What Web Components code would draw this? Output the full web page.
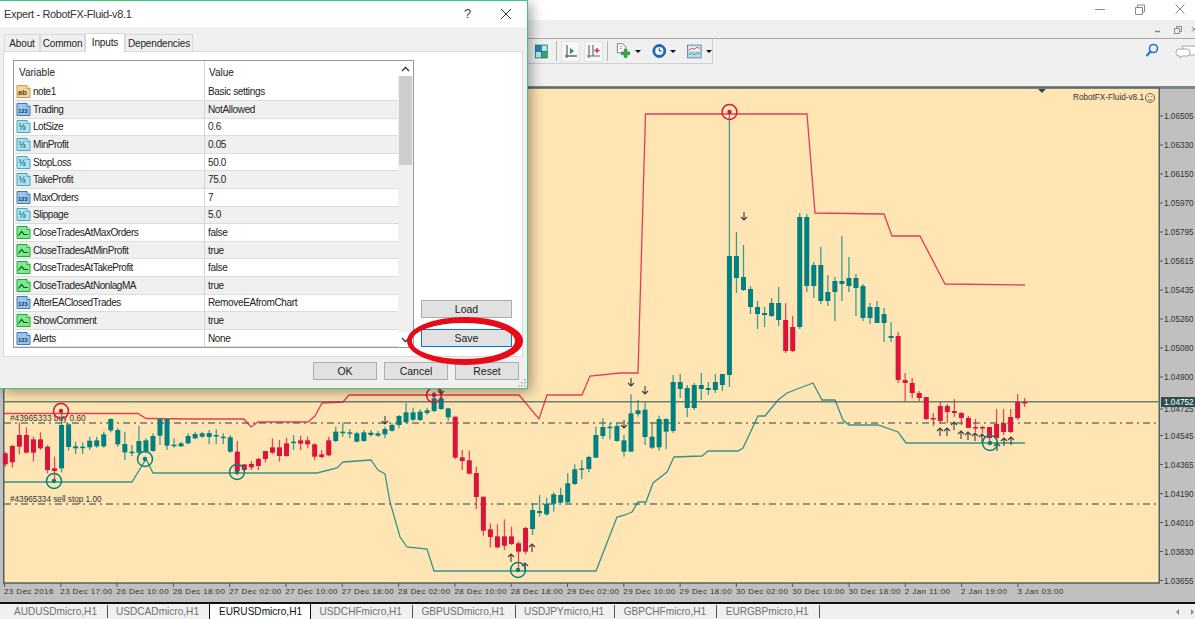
<!DOCTYPE html>
<html>
<head>
<meta charset="utf-8">
<style>
html, body { margin: 0; padding: 0; height: 619px; overflow: hidden; background: #f0f0f0; }
body { font-family: "Liberation Sans", Arial, sans-serif; }
</style>
</head>
<body>
<mt-app>
  <win-caption></win-caption>
  <main-toolbar></main-toolbar>
  <chart-view></chart-view>
  <chart-tabs>
    <chart-tab first>AUDUSDmicro,H1</chart-tab>
    <chart-tab noline>USDCADmicro,H1</chart-tab>
    <chart-tab active>EURUSDmicro,H1</chart-tab>
    <chart-tab>USDCHFmicro,H1</chart-tab>
    <chart-tab>GBPUSDmicro,H1</chart-tab>
    <chart-tab>USDJPYmicro,H1</chart-tab>
    <chart-tab>GBPCHFmicro,H1</chart-tab>
    <chart-tab>EURGBPmicro,H1</chart-tab>
  </chart-tabs>
  <expert-dialog>
    <input-row kind="str" name="note1" value="Basic settings"></input-row>
    <input-row kind="int" name="Trading" value="NotAllowed" shaded></input-row>
    <input-row kind="dbl" name="LotSize" value="0.6"></input-row>
    <input-row kind="dbl" name="MinProfit" value="0.05" shaded></input-row>
    <input-row kind="dbl" name="StopLoss" value="50.0"></input-row>
    <input-row kind="dbl" name="TakeProfit" value="75.0" shaded></input-row>
    <input-row kind="int" name="MaxOrders" value="7"></input-row>
    <input-row kind="dbl" name="Slippage" value="5.0" shaded></input-row>
    <input-row kind="bool" name="CloseTradesAtMaxOrders" value="false"></input-row>
    <input-row kind="bool" name="CloseTradesAtMinProfit" value="true" shaded></input-row>
    <input-row kind="bool" name="CloseTradesAtTakeProfit" value="false"></input-row>
    <input-row kind="bool" name="CloseTradesAtNonlagMA" value="true" shaded></input-row>
    <input-row kind="int" name="AfterEAClosedTrades" value="RemoveEAfromChart"></input-row>
    <input-row kind="bool" name="ShowComment" value="true" shaded></input-row>
    <input-row kind="int" name="Alerts" value="None"></input-row>
  </expert-dialog>
</mt-app>

<script>
class MtApp extends HTMLElement {
    constructor(){
        super();
        this.attachShadow({mode: 'open'}).innerHTML = `
        <style>
        :host { display: flex; flex-direction: column; width: 1195px; height: 619px; position: relative; overflow: hidden; }
        </style>
        <slot></slot>`;
    }
}

class WinCaption extends HTMLElement {
    constructor(){
        super();
        this.attachShadow({mode: 'open'}).innerHTML = `
        <style>
        :host { display: block; height: 38px; background: #efefef; }
        .top { height: 20px; background: #fff; display: flex; justify-content: flex-end; align-items: center; }
        .sub { height: 18px; display: flex; justify-content: flex-end; align-items: center; }
        svg { display: block; }
        </style>
        <div class="top">
          <svg width="110" height="20" viewBox="1085 0 110 20" fill="none" stroke="#8a8a8a">
            <path d="M1095 9.5h10"/>
            <path d="M1135.5 7.5h7v7h-7zM1137.5 7.5v-2.500h7v7h-2"/>
            <path d="M1175.500 4.500l9 9M1184.500 4.500l-9 9"/>
          </svg>
        </div>
        <div class="sub">
          <svg width="45" height="18" viewBox="1150 20 45 18" fill="none" stroke="#8a8a8a">
            <path d="M1155 31.500h5" stroke-width="1.500"/>
            <path d="M1174.500 28.500h5v5h-5zM1176.500 28.500v-2h5v5h-2"/>
            <path d="M1192 27l4 4.500M1196 27l-4 4.500"/>
          </svg>
        </div>`;
    }
}

class MainToolbar extends HTMLElement {
    constructor(){
        super();
        this.attachShadow({mode: 'open'}).innerHTML = `
        <style>
        :host { display: flex; height: 48px; background: #f0f0f0; border-top: 1px solid #a9a9a9; box-sizing: border-box; }
        .band { width: 713px; height: 25px; box-sizing: border-box; border-right: 1px solid #d0d0d0; border-bottom: 1px solid #d0d0d0; display: flex; align-items: center; padding-left: 535px; }
        .sep { width: 1px; height: 20px; background: #b5b5b5; margin: 0 4px 0 8px; }
        .btn { width: 21px; height: 21px; box-sizing: border-box; border: 1px solid #e3e3e3; background: #f7f7f7; display: flex; align-items: center; justify-content: center; margin-right: 4px; }
        .sep2 { margin: 0 8px 0 0; }
        .caret { width: 0; height: 0; border: 3px solid transparent; border-top: 3px solid #111; border-bottom: 0; margin: 0 12px 0 4px; }
        .right { flex: 1; display: flex; justify-content: flex-end; padding: 4px 0 0 0; gap: 16px; }
        svg { display: block; }
        </style>
        <div class="band">
          <svg width="14" height="15" viewBox="0 0 14 15">
            <rect width="14" height="15" fill="#148a6a"/>
            <rect x="1" y="1" width="5.500" height="6" fill="#2d7fc7"/><rect x="7.500" y="1" width="5.500" height="6" fill="#bfe0f2"/>
            <rect x="1" y="8" width="5.500" height="6" fill="#bfe0f2"/><rect x="7.500" y="8" width="5.500" height="6" fill="#35a868"/>
          </svg>
          <div class="sep"></div>
          <div class="btn">
            <svg width="15" height="15" viewBox="0 0 15 15" fill="none">
              <path d="M4 1v11h10M2 12h2v2" stroke="#6b6b6b" stroke-width="1.300"/>
              <path d="M7 4v6l4-3z" fill="#1f9a4b"/>
            </svg>
          </div>
          <div class="btn">
            <svg width="15" height="15" viewBox="0 0 15 15" fill="none">
              <path d="M3 1v11h11M1 12h2v2M7 1v11" stroke="#6b6b6b" stroke-width="1.200"/>
              <path d="M8.500 6.500h5M11 4v5" stroke="#d8232f" stroke-width="1.300"/>
            </svg>
          </div>
          <div class="sep sep2"></div>
          <svg width="16" height="18" viewBox="0 0 16 18" fill="none">
            <path d="M1.500 1h6l3 3v7h-9z" fill="#fff" stroke="#777"/>
            <path d="M4 4h3M4 6.500h3" stroke="#999"/>
            <path d="M9 7h3v3h3v3h-3v3H9v-3H6v-3h3z" fill="#2fae3f" stroke="#1a7d2a" stroke-width=".6"/>
          </svg>
          <div class="caret"></div>
          <svg width="16" height="16" viewBox="0 0 16 16" fill="none" style="margin-left:-1px">
            <circle cx="8" cy="8" r="7" fill="#1d6fc2" stroke="#0f4f96"/>
            <circle cx="8" cy="8" r="4.500" fill="#eef5fb"/>
            <path d="M8 5v3h2.500" stroke="#333"/>
          </svg>
          <div class="caret"></div>
          <svg width="16" height="15" viewBox="0 0 16 15" style="margin-left:-1px" fill="none">
            <rect x=".5" y=".5" width="15" height="14" fill="#b9d9f0" stroke="#5b87ad"/>
            <rect x="2" y="2" width="12" height="5" fill="#eef2f6"/>
            <path d="M2 6l3-2 3 1 3-2 3 1" stroke="#c9482f"/>
            <path d="M2 11l3-2 3 2 3-2 3 1" stroke="#3c9c45"/>
          </svg>
          <div class="caret" style="margin-right:0"></div>
        </div>
        <div class="right">
          <svg width="14" height="15" viewBox="0 0 14 15" fill="none">
            <circle cx="8.500" cy="5.500" r="4" stroke="#1d74c9" stroke-width="1.600"/>
            <path d="M5.500 8.500L1.500 13" stroke="#1d74c9" stroke-width="2.200"/>
          </svg>
          <svg width="24" height="16" viewBox="0 0 24 16" fill="#fff" stroke="#a8a8a8" style="margin-right:-4px">
            <path d="M7 3h12a3 3 0 0 1 3 3v3a3 3 0 0 1-3 3h-8z"/>
            <path d="M4 6h8a3 3 0 0 1 3 3v1a3 3 0 0 1-3 3H7l-2 2v-2H4a3 3 0 0 1-3-3V9a3 3 0 0 1 3-3z"/>
          </svg>
        </div>`;
    }
}

// candles: [bodyTop, bodyBottom, wickTop, wickBottom, 'r'|'t']
function fromZoom(list){
    return list.map(c => [385 + c[0] / 3, 385 + c[1] / 3, 385 + c[2] / 3, 385 + c[3] / 3, c[4]]);
}

const CANDLES = [].concat(fromZoom([
    [205,238,200,245,'r'],[183,232,180,248,'r'],[150,185,112,208,'r'],[150,203,127,205,'r'],[163,203,155,230,'r'],
    [163,190,142,195,'r'],[185,255,180,265,'r'],[250,258,215,290,'r'],[120,250,80,262,'t'],[118,186,115,197,'t'],
    [184,190,170,207,'t'],[185,188,172,207,'t'],[167,187,155,195,'t'],[166,184,155,188,'t'],[148,184,140,188,'t'],
    [102,136,100,142,'t'],[135,178,128,185,'t'],[177,202,140,225,'t'],[200,204,180,213,'t'],[168,203,122,210,'t'],
    [166,200,160,205,'t'],[153,198,145,200,'t'],[102,152,100,180,'t'],[102,182,100,195,'t'],[179,182,160,188,'t'],
    [175,184,170,186,'t'],[153,175,145,178,'t'],[147,160,140,162,'t'],[145,155,140,158,'t'],[144,156,135,178,'t'],
    [150,153,133,178,'t'],[155,157,145,178,'t'],[157,200,150,203,'t'],[200,258,168,270,'r'],[238,255,238,258,'r'],
    [237,247,228,255,'r'],[222,243,218,255,'r'],[198,222,198,232,'r'],[187,203,160,208,'r'],[187,213,165,230,'r'],
    [175,213,158,215,'r'],[170,173,150,195,'t'],[166,176,152,195,'r'],[166,178,155,190,'r'],[178,215,175,225,'r'],
    [208,216,195,220,'r'],[166,211,155,214,'r'],[140,168,125,172,'t'],[140,143,112,155,'t'],[142,146,133,160,'t'],
    [145,170,140,172,'t'],[142,168,135,170,'t'],[143,150,135,155,'t'],[145,152,138,155,'t'],[132,148,125,160,'t'],
    [120,137,115,140,'t'],[93,120,90,130,'t'],
    [82,112,55,115,'t'],[82,104,68,108,'t'],[80,105,72,108,'t'],[76,84,68,90,'t'],[40,78,20,82,'t'],
    [40,72,25,75,'t'],[70,97,68,108,'t'],[95,218,95,222,'r'],[217,228,195,255,'r'],[226,266,197,268,'r'],
    [264,336,245,372,'r'],[335,437,335,452,'r'],[433,456,415,487,'r'],[454,487,418,490,'r'],[454,482,403,495,'r'],
    [454,477,425,480,'r'],[475,500,470,555,'r'],[429,500,425,508,'r'],[375,432,355,450,'t'],[378,384,330,395,'t'],
    [356,388,338,392,'t'],[328,356,322,380,'t'],[330,353,308,355,'t'],[295,352,265,355,'t'],[253,297,238,300,'t'],
    [250,254,226,283,'t'],[216,252,212,262,'t'],[150,218,125,218,'t'],[126,153,100,162,'t'],[125,129,113,163,'t'],
    [123,168,115,170,'t'],[166,200,150,215,'t'],[85,200,28,200,'t'],[76,87,45,95,'t'],[74,156,52,180,'t'],
    [155,188,112,192,'t'],[102,187,92,197,'t'],[102,140,100,192,'t']
]), [
    [382,431,375,433,'t'],[382,389,374,398,'t'],[388,408,385,417,'t'],[385,408,383,410,'t'],[385,389,373,400,'t'],
    [388,390,382,395,'t'],[382,390,374,393,'t'],[374,385,374,391,'t'],[256,375,112,387,'t'],[256,278,232,293,'t'],
    [277,290,245,291,'t'],[289,307,286,314,'t'],[307,314,301,329,'t'],[313,315,307,327,'t'],[303,316,298,317,'t'],
    [303,320,287,326,'t'],[320,351,303,353,'r'],[327,351,316,352,'r'],[217,327,213,329,'t'],[217,286,214,292,'t'],
    [265,286,262,298,'t'],[265,301,247,304,'t'],[292,301,275,306,'t'],[281,292,277,321,'t'],[281,284,236,301,'t'],
    [278,286,257,292,'t'],[278,288,274,316,'t'],[286,318,284,321,'t'],[307,318,303,324,'t'],[307,323,301,323,'t'],
    [314,323,308,342,'t'],[336,338,322,342,'t'],
    [336,380,332,383,'r'],[380,383,373,401,'r'],[383,393,378,398,'r'],[393,398,391,401,'r'],[397,419,397,420,'r'],
    [418,419,413,426,'r'],[406,421,402,423,'r'],[406,412,404,423,'r'],[411,413,399,417,'r'],[413,418,412,425,'r'],
    [418,428,416,428,'r'],[427,428,419,432,'r'],[427,428,426,433,'r'],[427,438,427,443,'r'],[424,438,409,440,'r'],
    [423,432,409,435,'r'],[417,432,409,433,'r'],[402,418,394,420,'r'],[402,403,398,407,'r']
]);

const RED_LINE = "4,413.500 138,413.500 146,418.500 192,419 244,419 251,427 258,422 308,422 315,416 322,403 343,402 349,395 519,395 539,419 547,395 582,395 590,376 620,373 638,373 645.500,114 807,114 815,213 884,214 892,236 920,236 945,284 1025,285";
const TEAL_LINE = "4,482 132,482 146,459 153,473 317,473 337,468 343,462 371,460 378,470 385,474 390,502 400,537 407,547 427,549 434,571 596,571 617,517 625,515 632,512 638,502 646,502 653,483 667,472 674,457 702,456 708,451 738,451 743,448 758,416 765,416 778,400 787,393 813,383 822,400 835,400 843,420 849,425 878,425 898,432 906,443 1025,443";

const X_LABELS = ["23 Dec 2016","23 Dec 17:00","26 Dec 10:00","26 Dec 18:00","27 Dec 02:00","27 Dec 10:00","27 Dec 18:00","28 Dec 02:00","28 Dec 10:00","28 Dec 18:00","29 Dec 02:00","29 Dec 10:00","29 Dec 18:00","30 Dec 02:00","30 Dec 10:00","30 Dec 18:00","2 Jan 11:00","2 Jan 19:00","3 Jan 03:00"];
const Y_LABELS = [["1.06505",116],["1.06330",145],["1.06150",174],["1.05970",203],["1.05795",232],["1.05615",261],["1.05435",290],["1.05260",319],["1.05080",348],["1.04900",377],["1.04725",409],["1.04545",435.500],["1.04365",464.500],["1.04190",493.500],["1.04010",522.500],["1.03830",551.500],["1.03655",580.500]];

const UP_ARROWS = [[511,558],[532,548],[525,567],[940,432],[947,432],[954,426],[961,435],[968,436],[975,437],[982,438],[997,447],[1004,442],[1011,441]];
const DOWN_ARROWS = [[744,216],[631,382],[645,390],[385,420],[624,424],[441,390]];
const RED_MARKS = [[729.500,112],[61,411],[434,395]];
const TEAL_MARKS = [[54,481],[145,459],[237,472],[518,570],[990,443]];

class ChartView extends HTMLElement {
    constructor(){
        super();
        this.attachShadow({mode: 'open'});
    }

    connectedCallback(){
        this.render();
    }

    render(){
        const candles = CANDLES.map((c, i) => {
            const x = 5.33 + 7.03 * i;
            const col = c[4] === 'r' ? '#dc143c' : '#008080';
            return `<line x1="${x}" x2="${x}" y1="${c[2]}" y2="${c[3]}" stroke="${col}" stroke-opacity=".75" stroke-width="1.300"/>` +
                `<rect x="${x - 2.5}" y="${c[0]}" width="5" height="${Math.max(c[1] - c[0], 1.5)}" fill="${col}"/>`;
        }).join('');
        const xAxis = X_LABELS.map((t, i) => {
            const x = 4 + 56.3 * i;
            return `<line x1="${x + .5}" x2="${x + .5}" y1="583" y2="587" stroke="#555"/><text x="${x}" y="594" font-size="8" letter-spacing=".4">${t}</text>`;
        }).join('');
        const yAxis = Y_LABELS.map(l =>
            `<line x1="1160" x2="1163" y1="${l[1]}" y2="${l[1]}" stroke="#555"/><text x="1164" y="${l[1] + 3}" font-size="8.200">${l[0]}</text>`
        ).join('');
        const arrow = (x, y, up) => {
            const d = up ? -1 : 1;
            return `<path d="M${x} ${y - 4 * d}v${8 * d}M${x - 3} ${y + d}l3 ${3 * d}l3 ${-3 * d}" fill="none" stroke="#3a3a48" stroke-width="1.100"/>`;
        };
        const arrows = UP_ARROWS.map(a => arrow(a[0], a[1], true)).join('') + DOWN_ARROWS.map(a => arrow(a[0], a[1], false)).join('');
        const mark = (m, col) => `<circle cx="${m[0]}" cy="${m[1]}" r="7.500" fill="none" stroke="${col}" stroke-width="1.500"/><circle cx="${m[0]}" cy="${m[1]}" r="2.200" fill="${col}"/>`;
        const marks = RED_MARKS.map(m => mark(m, '#dc143c')).join('') + TEAL_MARKS.map(m => mark(m, '#008080')).join('');

        this.shadowRoot.innerHTML = `
        <style>
        :host { display: block; height: 516px; background: #c0c0c0; }
        svg { display: block; }
        text { font-family: "Liberation Sans", Arial, sans-serif; fill: #333; }
        .plot { fill: #ffe5b4; stroke: #4e6464; stroke-width: 1.500; }
        </style>
        <svg width="1195" height="516" viewBox="0 86 1195 516">
          <rect x="0" y="86" width="1195" height="3" fill="#7d8585"/>
          <rect class="plot" x="3.750" y="88" width="1155.500" height="495"/>
          <path d="M1038 89h8l-4 4z" fill="#2f4f4f"/>
          <line x1="4" x2="1160" y1="401.700" y2="401.700" stroke="#6a7f70" stroke-width="1.500"/>
          <line x1="4" x2="1160" y1="423" y2="423" stroke="#6a7a6c" stroke-width="1.500" stroke-dasharray="7 4 2 4"/>
          <line x1="4" x2="1160" y1="504" y2="504" stroke="#6a7a6c" stroke-width="1.500" stroke-dasharray="7 4 2 4"/>
          <text x="10" y="421" font-size="8.300">#43965333 buy 0.60</text>
          <text x="10" y="502" font-size="8.200">#43965334 sell stop 1.00</text>
          <polyline points="${RED_LINE}" fill="none" stroke="#dc143c" stroke-opacity=".8" stroke-width="1.300"/>
          <polyline points="${TEAL_LINE}" fill="none" stroke="#008080" stroke-opacity=".8" stroke-width="1.300"/>
          ${candles}
          ${arrows}
          ${marks}
          <text x="1073" y="100" font-size="8.200">RobotFX-Fluid-v8.1</text>
          <g fill="none" stroke="#444" stroke-width=".8">
            <circle cx="1150" cy="98" r="4.500"/>
            <path d="M1147.800 99.500q2.200 2 4.400 0"/>
            <path d="M1148.300 96v1M1151.700 96v1"/>
          </g>
          ${xAxis}
          ${yAxis}
          <rect x="1161" y="397" width="34" height="10" fill="#2f4f4f"/>
          <text x="1164" y="405" font-size="8.200" style="fill:#fff">1.04752</text>
        </svg>`;
    }
}

class ChartTabs extends HTMLElement {
    constructor(){
        super();
        this.attachShadow({mode: 'open'}).innerHTML = `
        <style>
        :host { display: flex; height: 17px; box-sizing: border-box; border-top: 2px solid #111; background: #f0f0f0; padding-left: 3px; align-items: stretch; position: relative; }
        .nav { position: absolute; right: 0; top: 0; bottom: 0; display: flex; align-items: center; gap: 12px; padding-right: 1px; }
        .nav i { width: 0; height: 0; border: 3px solid transparent; }
        .nav .l { border-right: 3px solid #8a8a8a; border-left: 0; }
        .nav .r { border-left: 3px solid #8a8a8a; border-right: 0; }
        </style>
        <slot></slot>
        <div class="nav"><i class="l"></i><i class="r"></i></div>`;
    }
}

class ChartTab extends HTMLElement {
    constructor(){
        super();
        this.attachShadow({mode: 'open'}).innerHTML = `
        <style>
        :host { display: flex; align-items: center; box-sizing: border-box; padding: 0 10px 0 8.500px; font-size: 10.100px; color: #707070; border-right: 1px solid #555; margin: 1px 0; white-space: nowrap; }
        :host([first]) { padding-left: 11px; }
        :host([noline]) { border-right: 0; padding-left: 8px; }
        :host([active]) { background: #fff; color: #111; border-left: 1px solid #111; border-right: 1px solid #111; margin: 0; padding: 0 8px 0 9px; }
        </style>
        <slot></slot>`;
    }
}

const PAGE = 'M1 1.500h10l3 3v9H1z';
const FOLD = 'M11 1.500v3h3';
const ICONS = {
    str: `<path d="${PAGE}" fill="#f6d498" stroke="#c99a54"/><path d="${FOLD}" fill="#fff" stroke="#c99a54"/><text x="2" y="10.500" font-size="7.500" font-weight="700" fill="#5f4114">ab</text>`,
    int: `<path d="${PAGE}" fill="#9cc4e8" stroke="#3f7db5"/><path d="${FOLD}" fill="#fff" stroke="#3f7db5"/><text x="2" y="10.500" font-size="5.800" font-weight="700" fill="#0f3a69">123</text>`,
    dbl: `<path d="${PAGE}" fill="#aee2ee" stroke="#45a8bd"/><path d="${FOLD}" fill="#fff" stroke="#45a8bd"/><text x="2.500" y="11" font-size="9" font-weight="700" fill="#13707f">½</text>`,
    bool: `<path d="${PAGE}" fill="#7ceb8a" stroke="#25a83e"/><path d="${FOLD}" fill="#fff" stroke="#25a83e"/><path d="M2.500 10.500l3-4 2.500 3h4" fill="none" stroke="#1a5527" stroke-width="1.200"/>`
};

class InputRow extends HTMLElement {
    connectedCallback(){
        if (this.shadowRoot) return;
        const kind = this.getAttribute('kind');
        this.attachShadow({mode: 'open'}).innerHTML = `
        <style>
        :host { display: grid; grid-template-columns: 190px 1fr; height: 17.600px; box-sizing: border-box; border-bottom: 1.500px solid #dcdcdc; font-size: 10px; letter-spacing: -.35px; color: #222; background: #fff; }
        :host([shaded]) { background: #f0f0f0; }
        .var { display: flex; align-items: center; gap: 2px; padding-left: 1px; border-right: 1px solid #d4d4d4; overflow: hidden; white-space: nowrap; letter-spacing: -.45px; }
        .val { display: flex; align-items: center; padding-left: 3px; }
        svg { display: block; flex: none; }
        text { font-family: "Liberation Sans", Arial, sans-serif; letter-spacing: 0; }
        </style>
        <div class="var"><svg width="15" height="15" viewBox="0 0 15 15">${ICONS[kind]}</svg><span>${this.getAttribute('name')}</span></div>
        <div class="val">${this.getAttribute('value')}</div>`;
    }
}

class DlgButton extends HTMLElement {
    constructor(){
        super();
        this.attachShadow({mode: 'open'}).innerHTML = `
        <style>
        :host { display: flex; align-items: center; justify-content: center; box-sizing: border-box; background: #e1e1e1; border: 1px solid #adadad; font-size: 10.500px; color: #222; }
        :host([focused]) { border: 1.500px solid #0078d7; }
        </style>
        <slot></slot>`;
    }
}

class ExpertDialog extends HTMLElement {
    constructor(){
        super();
        this.attachShadow({mode: 'open'}).innerHTML = `
        <style>
        :host { position: absolute; left: 0; top: 0; width: 528px; height: 389px; box-sizing: border-box; border: 1px solid #3fc878; border-left: 0; background: #f0f0f0; display: flex; flex-direction: column; box-shadow: 3px 3px 12px rgba(0,0,0,.38); font-size: 10px; color: #222; }
        .cap { height: 26px; flex: none; background: #fff; display: flex; align-items: center; padding-left: 4px; font-size: 11px; letter-spacing: -.35px; color: #333; position: relative; }
        .cap .help { position: absolute; left: 464px; top: 5px; font-size: 13px; color: #444; }
        .cap svg { position: absolute; left: 500px; top: 7px; }
        .tabs { height: 24px; flex: none; display: flex; align-items: flex-end; padding-left: 4px; letter-spacing: -.15px; }
        .tab { height: 17px; box-sizing: border-box; background: #f0f0f0; border: 1px solid #d9d9d9; border-bottom: 0; display: flex; align-items: center; justify-content: center; padding-top: 1px; }
        .tab.on { height: 19px; background: #fff; position: relative; top: 1px; padding: 0 0 2px; }
        .panel { height: 306px; flex: none; margin: 0 4px 0 3px; box-sizing: border-box; background: #fff; border: 1px solid #d9d9d9; padding: 8px 0 0 9px; display: flex; }
        .table { width: 401px; height: 288px; box-sizing: border-box; border: 1.500px solid #9a9a9a; display: flex; flex: none; }
        .list { flex: 1; padding-left: 1px; }
        .head { height: 22.500px; display: grid; grid-template-columns: 190px 1fr; }
        .head div { padding: 6px 0 0 4px; }
        .head div:first-child { border-right: 1px solid #d4d4d4; }
        .scroll { width: 15px; background: #f0f0f0; position: relative; display: flex; flex-direction: column; }
        .scroll .arrow { height: 15px; display: flex; align-items: center; justify-content: center; background: #fff; }
        .scroll .thumb { height: 89px; background: #cdcdcd; margin: 0 1px; }
        .scroll .fill { flex: 1; }
        .side { width: 91px; margin-left: 7px; display: flex; flex-direction: column; justify-content: flex-end; gap: 11px; padding-bottom: 9px; }
        .side dlg-button { height: 18px; }
        .foot { flex: 1; display: flex; justify-content: flex-end; gap: 7px; padding: 5px 8px 0 0; position: relative; }
        .foot dlg-button { width: 64px; height: 18px; }
        .ring { position: absolute; left: 400px; top: 310px; pointer-events: none; }
        .grip { position: absolute; right: 1px; bottom: 1px; }
        svg { display: block; }
        </style>
        <div class="cap">Expert - RobotFX-Fluid-v8.1<span class="help">?</span>
          <svg width="12" height="12" viewBox="0 0 12 12" fill="none" stroke="#333"><path d="M1 1l10 10M11 1L1 11"/></svg>
        </div>
        <div class="tabs">
          <div class="tab" style="width:36px">About</div>
          <div class="tab" style="width:45px">Common</div>
          <div class="tab on" style="width:40px">Inputs</div>
          <div class="tab" style="width:68px">Dependencies</div>
        </div>
        <div class="panel">
          <div class="table">
            <div class="list">
              <div class="head"><div>Variable</div><div>Value</div></div>
              <slot></slot>
            </div>
            <div class="scroll">
              <div class="arrow"><svg width="9" height="6" viewBox="0 0 9 6" fill="none" stroke="#333" stroke-width="1.300"><path d="M1 5l3.500-3.500L8 5"/></svg></div>
              <div class="thumb"></div>
              <div class="fill"></div>
              <div class="arrow"><svg width="9" height="6" viewBox="0 0 9 6" fill="none" stroke="#333" stroke-width="1.300"><path d="M1 1l3.500 3.500L8 1"/></svg></div>
            </div>
          </div>
          <div class="side">
            <dlg-button>Load</dlg-button>
            <dlg-button focused>Save</dlg-button>
          </div>
        </div>
        <div class="foot">
          <dlg-button>OK</dlg-button>
          <dlg-button>Cancel</dlg-button>
          <dlg-button>Reset</dlg-button>
          <svg class="grip" width="8" height="8" viewBox="0 0 8 8" fill="#a8a8a8"><rect x="6" y="0" width="1.500" height="1.500"/><rect x="3" y="3" width="1.500" height="1.500"/><rect x="6" y="3" width="1.500" height="1.500"/><rect x="0" y="6" width="1.500" height="1.500"/><rect x="3" y="6" width="1.500" height="1.500"/><rect x="6" y="6" width="1.500" height="1.500"/></svg>
        </div>
        <svg class="ring" width="130" height="60" viewBox="400 310 130 60">
          <path fill="#e60b16" fill-rule="evenodd" d="M407 340a58 24 0 1 0 116 0a58 24 0 1 0-116 0zM412 340a51.500 18 0 1 1 103 0a51.500 18 0 1 1-103 0z"/>
        </svg>`;
    }
}

customElements.define('mt-app', MtApp);
customElements.define('win-caption', WinCaption);
customElements.define('main-toolbar', MainToolbar);
customElements.define('chart-view', ChartView);
customElements.define('chart-tabs', ChartTabs);
customElements.define('chart-tab', ChartTab);
customElements.define('input-row', InputRow);
customElements.define('dlg-button', DlgButton);
customElements.define('expert-dialog', ExpertDialog);
</script>
</body>
</html>
